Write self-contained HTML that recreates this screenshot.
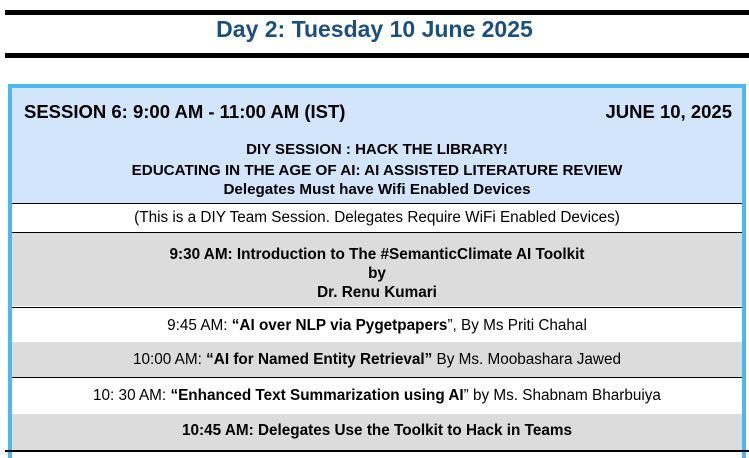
<!DOCTYPE html>
<html><head><style>
body{margin:0;width:749px;height:454px;background:#fff;font-family:"Liberation Sans",Arial,sans-serif;position:relative;overflow:hidden;color:#000}
.line{position:absolute;left:5px;right:0;height:5px;background:#000}
.title{position:absolute;top:16px;left:0;width:749px;text-align:center;font-weight:bold;font-size:23px;color:#1b4f7c}
.box{position:absolute;left:8px;top:84px;width:730px;height:370px;border:4px solid #4db8f0;border-bottom:none;}
.row{position:absolute;left:0;right:0;border-top:1px solid #000;text-align:center;font-size:15.3px}
.bottom{position:absolute;left:5px;right:0;top:450px;height:2px;background:#000}
</style></head><body>
<div class="line" style="top:10px"></div>
<div class="title">Day 2: Tuesday 10 June 2025</div>
<div class="line" style="top:53px"></div>
<div class="box">
<div class="row" style="top:0;height:115px;background:#d2e5fb;border-top:none;font-weight:bold">
 <div style="position:absolute;left:12px;top:13px;font-size:18.5px">SESSION 6: 9:00 AM - 11:00 AM (IST)</div>
 <div style="position:absolute;right:10px;top:13px;font-size:18.5px">JUNE 10, 2025</div>
 <div style="position:absolute;left:0;right:0;top:53px;font-size:15px">DIY SESSION : HACK THE LIBRARY!</div>
 <div style="position:absolute;left:0;right:0;top:74px;font-size:15.2px">EDUCATING IN THE AGE OF AI: AI ASSISTED LITERATURE REVIEW</div>
 <div style="position:absolute;left:0;right:0;top:93px;font-size:15.2px">Delegates Must have Wifi Enabled Devices</div>
</div>
<div class="row" style="top:115px;height:28px;line-height:28px;background:#fff">(This is a DIY Team Session. Delegates Require WiFi Enabled Devices)</div>
<div class="row" style="top:144px;height:74px;background:#dcdcdc;font-weight:bold;line-height:19px;padding-top:12px;box-sizing:border-box">9:30 AM: Introduction to The #SemanticClimate AI Toolkit<br>by<br>Dr. Renu Kumari</div>
<div class="row" style="top:219px;height:35px;line-height:35px;background:#fff">9:45 AM: <b>“AI over NLP via Pygetpapers</b>”, By Ms Priti Chahal</div>
<div class="row" style="top:254px;height:35px;line-height:35px;background:#dcdcdc;border-top:none">10:00 AM: <b>“AI for Named Entity Retrieval”</b> By Ms. Moobashara Jawed</div>
<div class="row" style="top:289px;height:36px;line-height:36px;background:#fff">10: 30 AM: <b>“Enhanced Text Summarization using AI</b>” by Ms. Shabnam Bharbuiya</div>
<div class="row" style="top:326px;height:36px;line-height:34px;background:#dcdcdc;border-top:none;font-weight:bold">10:45 AM: Delegates Use the Toolkit to Hack in Teams</div>
</div>
<div class="bottom"></div>
</body></html>
